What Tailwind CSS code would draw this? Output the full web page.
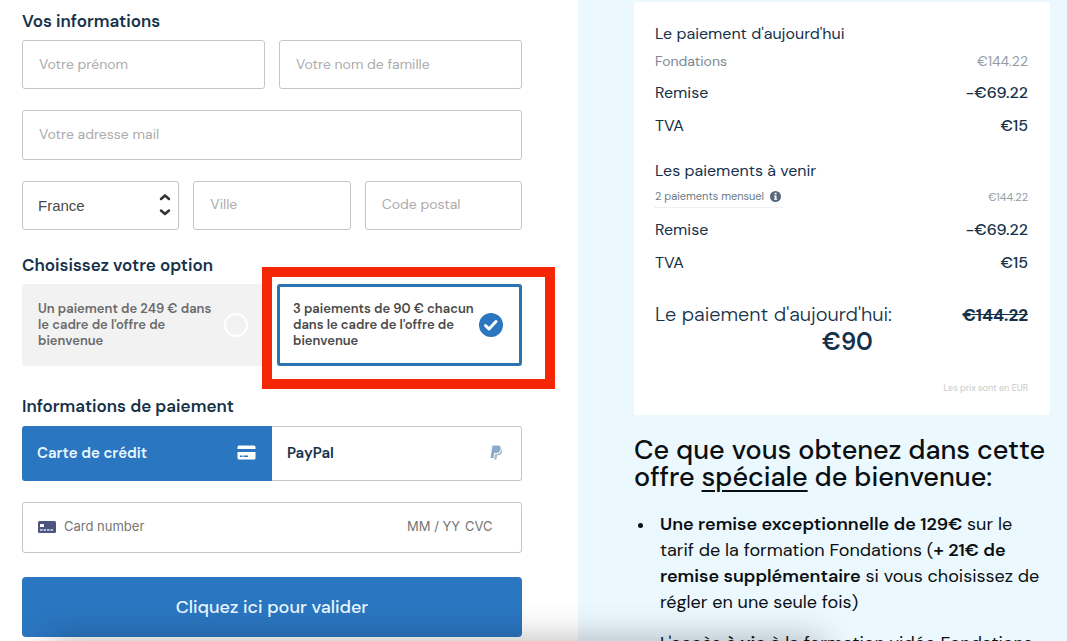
<!DOCTYPE html>
<html lang="fr">
<head>
<meta charset="utf-8">
<meta name="viewport" content="width=device-width, initial-scale=1">
<title>Paiement – Fondations</title>
<script src="https://cdn.jsdelivr.net/npm/@tailwindcss/browser@4"></script>
</head>
<body class="relative h-screen overflow-hidden bg-white font-['DM_Sans','Inter',sans-serif] text-[#16324a]">
<div class="grid min-h-full grid-cols-[578fr_489fr]">
  <form class="pt-[11px] pr-14 pl-[22px]">
    <h2 class="text-[17px] leading-5 font-semibold">Vos informations</h2>
    <div class="mt-[9px] grid grid-cols-2 gap-[14px]">
      <input type="text" aria-label="Votre prénom" placeholder="Votre prénom" class="h-[49px] w-full min-w-0 rounded-[3px] border border-[#c6c6c6] bg-white px-4 pb-0.5 text-sm placeholder:text-[#acacac]">
      <input type="text" aria-label="Votre nom de famille" placeholder="Votre nom de famille" class="h-[49px] w-full min-w-0 rounded-[3px] border border-[#c6c6c6] bg-white px-4 pb-0.5 text-sm placeholder:text-[#acacac]">
    </div>
    <input type="email" aria-label="Votre adresse mail" placeholder="Votre adresse mail" class="mt-[21px] block h-[50px] w-full rounded-[3px] border border-[#c6c6c6] bg-white px-4 pb-0.5 text-sm placeholder:text-[#acacac]">
    <div class="mt-[21px] grid grid-cols-3 gap-[14px]">
      <div class="relative">
        <select aria-label="Pays" class="h-[49px] w-full appearance-none rounded-[3px] border border-[#c6c6c6] bg-white pt-0.5 pr-8 pl-[15px] font-['Liberation_Sans',sans-serif] text-[15px] text-[#4a4a4a]"><option>France</option></select>
        <svg class="pointer-events-none absolute top-3 right-2 h-6 w-3" viewBox="0 0 12 24" fill="none" stroke="#333" stroke-width="2.500" stroke-linecap="round" stroke-linejoin="round"><path d="M2 6 6 2.500l4 3.500M2 17.500l4 3.500L10 17.500"/></svg>
      </div>
      <input type="text" aria-label="Ville" placeholder="Ville" class="h-[49px] w-full min-w-0 rounded-[3px] border border-[#c6c6c6] bg-white px-4 pb-1 text-sm placeholder:text-[#acacac]">
      <input type="text" aria-label="Code postal" placeholder="Code postal" class="h-[49px] w-full min-w-0 rounded-[3px] border border-[#c6c6c6] bg-white px-4 pb-1 text-sm placeholder:text-[#acacac]">
    </div>

    <h2 class="mt-[25px] text-[17px] leading-5 font-semibold">Choisissez votre option</h2>
    <div class="mt-[9px] grid grid-cols-2 gap-[10px]">
      <label class="flex h-[82px] items-center justify-between rounded-[3px] bg-[#f2f2f2] pr-[19px] pl-4 text-[13px] leading-4 font-semibold text-[#6b6b6b]">
        <span>Un paiement de 249 € dans<br>le cadre de l'offre de<br>bienvenue</span>
        <input type="radio" name="option" class="size-6 shrink-0 appearance-none rounded-full border-2 border-white">
      </label>
      <div class="relative">
        <label class="flex h-[82px] items-center justify-between rounded-[3px] border-3 border-[#2b74b0] bg-white pr-4 pl-[13px] text-[13px] leading-4 font-semibold text-[#4a4a4a]">
          <span>3 paiements de 90 € chacun<br>dans le cadre de l'offre de<br>bienvenue</span>
          <span class="relative size-6 shrink-0">
            <input type="radio" name="option" checked class="block size-6 appearance-none rounded-full bg-[#2b76c1]">
            <svg class="pointer-events-none absolute inset-0 size-6" viewBox="0 0 24 24" fill="none" stroke="#fff" stroke-width="3" stroke-linecap="round" stroke-linejoin="round"><path d="m6.500 12.500 3.500 3.500 7-7.500"/></svg>
          </span>
        </label>
        <div class="pointer-events-none absolute -top-[17px] -right-[33px] -bottom-[23px] -left-[15px] border-10 border-[#f42604]"></div>
      </div>
    </div>

    <h2 class="mt-[30px] text-[17px] leading-5 font-semibold">Informations de paiement</h2>
    <div class="mt-[10px] grid h-[55px] grid-cols-2">
      <button type="button" class="flex items-center justify-between rounded-l-[3px] bg-[#2b76c1] pr-4 pl-[15px] text-[15px] font-semibold text-[#eaf8ff]">Carte de crédit
        <svg class="mb-0.5 h-[15px] w-[19px]" viewBox="0 0 19 15"><path fill="#fff" d="M2 .5h15a1.500 1.500 0 0 1 1.500 1.500v2H.5V2A1.500 1.500 0 0 1 2 .5ZM.5 7h18v6a1.500 1.500 0 0 1-1.500 1.500H2A1.500 1.500 0 0 1 .5 13Z"/><path stroke="#2b76c1" stroke-width="1.500" d="M3 11.300h2.500M6.500 11.300H11"/></svg>
      </button>
      <button type="button" class="flex items-center justify-between rounded-r-[3px] border border-l-0 border-[#c6c6c6] bg-white pr-[18px] pl-[15px] text-[15px] font-semibold">PayPal
        <svg class="mb-0.5 h-[15px] w-[13px]" viewBox="0 0 13 15"><path fill="#8ba9c8" d="M2.500.5h5c2.300 0 3.600 1.200 3.200 3.300C10.300 6.600 8.600 8 6 8H4.300l-.9 5H.5Z"/><path fill="#a3bbd3" d="M11.400 4.300c.7.600.9 1.500.7 2.600-.5 2.300-1.900 3.300-4.200 3.300h-.8l-.7 4.300H3.900l.2-1h.2l.8-4.600h1.500c2.600 0 4.300-1.600 4.800-4.600Z"/></svg>
      </button>
    </div>
    <div class="mt-[21px] flex h-[51px] items-center rounded-[3px] border border-[#c6c6c6] bg-white pr-[25px] pb-0.5 pl-[15px] font-['Inter',sans-serif] text-[13px] text-[#757575]">
      <svg class="mr-2 h-3 w-[18px] shrink-0" viewBox="0 0 18 12"><rect width="18" height="12" rx="1.500" fill="#4a5680"/><rect x="2" y="3" width="4" height="3" rx=".5" fill="#fff"/><path stroke="#dfe3f0" stroke-width="1.400" stroke-dasharray="2.500 1" d="M2 9h14"/></svg>
      <input type="text" aria-label="Card number" placeholder="Card number" class="min-w-0 flex-1 placeholder:text-[#757575]">
      <input type="text" aria-label="Expiration" placeholder="MM / YY" class="w-[58px] placeholder:text-[#757575]">
      <input type="text" aria-label="CVC" placeholder="CVC" class="w-[31px] placeholder:text-[#757575]">
    </div>
    <button type="submit" class="mt-6 h-[60px] w-full rounded-[4px] bg-[#2b76c1] text-lg font-medium text-[#eaf8ff]">Cliquez ici pour valider</button>
  </form>

  <aside class="bg-[#ebf8fe] pt-[2px] pr-[17px] pl-14">
    <section class="rounded-[2px] bg-white pt-[18px] pr-[22px] pb-[19px] pl-[21px]">
      <h3 class="text-base leading-7">Le paiement d'aujourd'hui</h3>
      <dl>
        <div class="flex h-[26px] items-center justify-between text-sm text-[#7b8894]"><dt>Fondations</dt><dd class="text-[#929ca6]">€144.22</dd></div>
        <div class="mt-0.5 flex h-[33px] items-center justify-between text-base"><dt>Remise</dt><dd class="font-medium">-€69.22</dd></div>
        <div class="flex h-[33px] items-center justify-between text-base"><dt>TVA</dt><dd class="font-medium">€15</dd></div>
      </dl>
      <h3 class="mt-[15px] text-base leading-7">Les paiements à venir</h3>
      <dl>
        <div class="flex items-end justify-between text-[11px] leading-[22px] text-[#6d7b89]">
          <dt class="flex items-center gap-[6px] border-b border-dotted border-[#e2e2e2] pr-0.5">2 paiements mensuel
            <svg class="size-[11px]" viewBox="0 0 11 11"><circle cx="5.500" cy="5.500" r="5.500" fill="#566879"/><path fill="#fff" d="M4.600 1.800h1.900v1.600H4.600ZM4 4.400h2.500v3.400H7.200v1H4v-1h.7V5.400H4Z"/></svg>
          </dt>
          <dd class="text-[#929ca6]">€144.22</dd>
        </div>
        <div class="mt-[5px] flex h-[33px] items-center justify-between text-base"><dt>Remise</dt><dd class="font-medium">-€69.22</dd></div>
        <div class="flex h-[33px] items-center justify-between text-base"><dt>TVA</dt><dd class="font-medium">€15</dd></div>
      </dl>
      <div class="mt-[21px] flex items-center justify-between leading-7"><span class="text-xl leading-7 font-light">Le paiement d'aujourd'hui:</span><s class="pt-0.5 text-[17px] leading-6 font-bold">€144.22</s></div>
      <p class="pl-3 text-center text-2xl leading-7 font-semibold">€90</p>
      <p class="mt-6 text-right text-[9px] leading-4 text-[#c9c9c9]">Les prix sont en EUR</p>
    </section>
    <h1 class="mt-[21px] text-[27px] leading-[27px] font-medium text-[#0b0f12]">Ce que vous obtenez dans cette<br>offre <u class="decoration-2 underline-offset-4">spéciale</u> de bienvenue:</h1>
    <ul class="mt-[21px] space-y-[15px] text-lg leading-[26px] text-[#0b0f12]">
      <li class="flex gap-[17px] pl-1">
        <span class="mt-3 size-[5px] shrink-0 rounded-full bg-[#0b0f12]"></span>
        <p class="whitespace-nowrap"><b class="font-semibold">Une remise exceptionnelle de 129€</b> sur le<br>tarif de la formation Fondations (<b class="font-semibold">+ 21€ de<br>remise supplémentaire</b> si vous choisissez de<br>régler en une seule fois)</p>
      </li>
      <li class="pl-[26px] whitespace-nowrap">L'accès <b class="font-semibold">à vie</b> à la formation vidéo Fondations</li>
    </ul>
  </aside>
</div>
<div class="pointer-events-none absolute top-full right-[23%] left-12 h-10 shadow-[0_0_36px_rgba(0,0,0,0.3)]"></div>
</body>
</html>
